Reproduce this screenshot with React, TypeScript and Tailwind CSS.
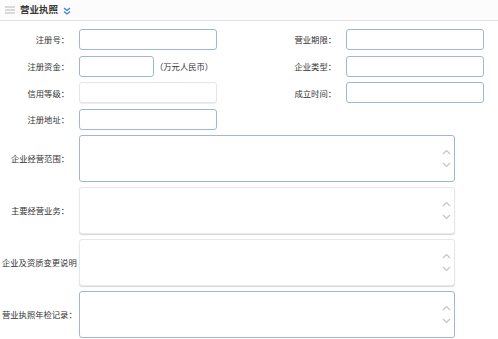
import React from "react";

const font = { fontFamily: '"Noto Sans CJK SC", "Noto Sans", sans-serif' };

function Chevrons() {
  return (
    <div className="flex flex-col items-center gap-[7px] pr-[3px]">
      <svg width="9" height="6" viewBox="0 0 9 6">
        <path d="M1 5 L4.5 1.5 L8 5" fill="none" stroke="#c4c4c4" strokeWidth="1.2" />
      </svg>
      <svg width="9" height="6" viewBox="0 0 9 6">
        <path d="M1 1 L4.5 4.5 L8 1" fill="none" stroke="#c4c4c4" strokeWidth="1.2" />
      </svg>
    </div>
  );
}

function Input({ w = "w-[138px]", blue = true }: { w?: string; blue?: boolean }) {
  return (
    <div
      className={`${w} h-[21px] rounded-[3px] bg-white ${
        blue ? "border border-[#9fb6da]" : "border border-[#e6e6e6] shadow-[0_1px_0_#eeeeee]"
      }`}
    />
  );
}

function Area({ blue }: { blue: boolean }) {
  return (
    <div
      className={`w-[376px] h-[47px] rounded-[3px] bg-white flex items-center justify-end ${
        blue ? "border border-[#9fb6da]" : "border border-[#e8e8e8] shadow-[0_1px_1px_#d8d8d8]"
      }`}
    >
      <Chevrons />
    </div>
  );
}

export default function App() {
  const label = "text-[8.3px] text-[#333] leading-none whitespace-nowrap";
  return (
    <div className="w-[498px] h-[339px] bg-white overflow-hidden" style={font}>
      <div className="h-[21px] flex items-center border-b border-[#e3e3e3] bg-[#fcfcfc]">
        <svg className="ml-[5px]" width="10" height="8" viewBox="0 0 10 8">
          <path d="M0 1 H10 M0 4 H10 M0 7 H10" stroke="#b5b5b5" strokeWidth="1" />
        </svg>
        <span className="ml-[5px] text-[9.5px] font-bold text-[#3a3a3a] leading-none">营业执照</span>
        <svg className="ml-[5px] mt-[2px]" width="8" height="8" viewBox="0 0 8 8">
          <path d="M1 1 L4 3.5 L7 1 M1 4.5 L4 7 L7 4.5" fill="none" stroke="#3c7fd8" strokeWidth="1.3" />
        </svg>
      </div>

      <div className="pt-[8px] flex flex-col gap-[5.6px]">
        <div className="flex items-center">
          <div className="w-[249px] flex items-center">
            <div className={`w-[79px] text-right pr-[10px] ${label}`}>注册号：</div>
            <Input />
          </div>
          <div className="flex items-center">
            <div className={`w-[97px] text-right pr-[10px] ${label}`}>营业期限：</div>
            <Input />
          </div>
        </div>
        <div className="flex items-center">
          <div className="w-[249px] flex items-center">
            <div className={`w-[79px] text-right pr-[10px] ${label}`}>注册资金：</div>
            <Input w="w-[75px]" />
            <span className={`ml-[1px] ${label}`}>（万元人民币）</span>
          </div>
          <div className="flex items-center">
            <div className={`w-[97px] text-right pr-[10px] ${label}`}>企业类型：</div>
            <Input />
          </div>
        </div>
        <div className="flex items-center">
          <div className="w-[249px] flex items-center">
            <div className={`w-[79px] text-right pr-[10px] ${label}`}>信用等级：</div>
            <Input blue={false} />
          </div>
          <div className="flex items-center">
            <div className={`w-[97px] text-right pr-[10px] ${label}`}>成立时间：</div>
            <Input />
          </div>
        </div>
        <div className="flex items-center">
          <div className="w-[249px] flex items-center">
            <div className={`w-[79px] text-right pr-[10px] ${label}`}>注册地址：</div>
            <Input />
          </div>
        </div>
      </div>

      <div className="pt-[5px] flex flex-col gap-[5px]">
        <div className="flex items-center">
          <div className={`w-[79px] text-right pr-[10px] ${label}`}>企业经营范围：</div>
          <Area blue />
        </div>
        <div className="flex items-center">
          <div className={`w-[79px] text-right pr-[10px] ${label}`}>主要经营业务：</div>
          <Area blue={false} />
        </div>
        <div className="flex items-center">
          <div className={`w-[79px] pl-[2px] ${label}`}>企业及资质变更说明</div>
          <Area blue={false} />
        </div>
        <div className="flex items-center">
          <div className={`w-[79px] pl-[2px] ${label}`}>营业执照年检记录：</div>
          <Area blue />
        </div>
      </div>
    </div>
  );
}
